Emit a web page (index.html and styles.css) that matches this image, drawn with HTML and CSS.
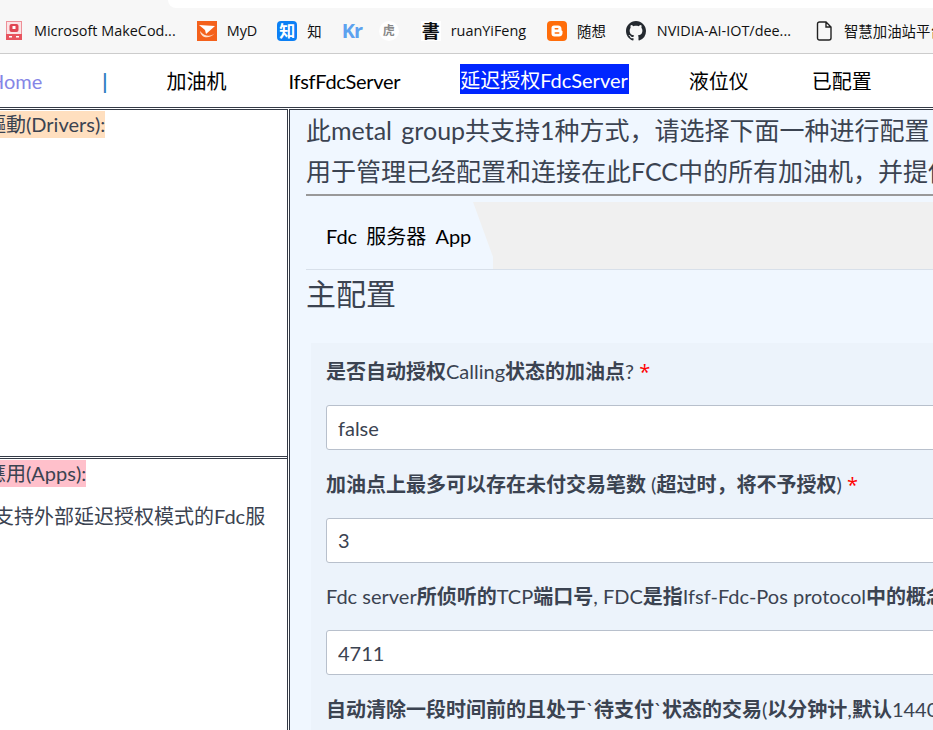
FILE: index.html
```html
<!DOCTYPE html>
<html lang="zh">
    <head>
        <meta charset="utf-8">
        <title>FdcServer</title>
        <link rel="stylesheet" href="styles.css">
    </head>
    <body>
        <div class="tabstrip"><div class="tab-edge"></div></div>

        <div class="bookmarks">
            <a class="mark mark-make">
                <svg class="fav-make" viewBox="0 0 16 19">
                    <rect x="0.5" y="0.5" width="15" height="18" fill="#fbe3e5" stroke="#ee8f97"/>
                    <rect x="0" y="13" width="16" height="6" fill="#e8545f"/>
                    <rect x="3.5" y="3" width="9" height="8" rx="2" fill="#e04653"/>
                    <rect x="6.5" y="5" width="3" height="3" fill="#fff"/>
                    <rect x="3" y="15" width="3" height="1.5" fill="#fff"/>
                    <rect x="10" y="15" width="3" height="1.5" fill="#fff"/>
                </svg>
                <span>Microsoft MakeCod...</span>
            </a>
            <a class="mark mark-myd">
                <svg class="fav" viewBox="0 0 20 20">
                    <rect width="20" height="20" fill="#f4611c"/>
                    <path d="M2 4 L18 5 L9 13 L8 9 Z" fill="#fff"/>
                    <path d="M3 10 C4 17 12 19 18 12 C14 16 8 16 3 10 Z" fill="#fde0cf"/>
                </svg>
                <span>MyD</span>
            </a>
            <a class="mark mark-zhi">
                <i class="fav fav-zhi">知</i>
                <span>知</span>
            </a>
            <a class="mark mark-kr"><i class="fav fav-kr">Kr</i></a>
            <a class="mark mark-hu"><i class="fav fav-hu">虎</i></a>
            <a class="mark mark-ruan">
                <i class="fav fav-shu">書</i>
                <span>ruanYiFeng</span>
            </a>
            <a class="mark mark-blog">
                <svg class="fav" viewBox="0 0 20 20">
                    <rect width="20" height="20" rx="4" fill="#ff6d0a"/>
                    <path d="M7 4.5 H11 A3.5 3.5 0 0 1 14.5 8 V9 A1.5 1.5 0 0 0 15.5 10 V12.5 A3.5 3.5 0 0 1 12 15.5 H7.5 A3 3 0 0 1 4.5 12.5 V7 A2.5 2.5 0 0 1 7 4.5 Z" fill="#fff"/>
                    <rect x="7.5" y="7" width="4" height="1.6" rx="0.8" fill="#ff6d0a"/>
                    <rect x="7.5" y="11.2" width="5" height="1.6" rx="0.8" fill="#ff6d0a"/>
                </svg>
                <span>随想</span>
            </a>
            <a class="mark mark-git">
                <svg class="fav" viewBox="0 0 16 16">
                    <path fill="#24292f" d="M8 0C3.58 0 0 3.58 0 8c0 3.54 2.29 6.53 5.47 7.59.4.07.55-.17.55-.38 0-.19-.01-.82-.01-1.49-2.01.37-2.53-.49-2.69-.94-.09-.23-.48-.94-.82-1.13-.28-.15-.68-.52-.01-.53.63-.01 1.08.58 1.23.82.72 1.21 1.87.87 2.33.66.07-.52.28-.87.51-1.07-1.78-.2-3.64-.89-3.64-3.95 0-.87.31-1.59.82-2.15-.08-.2-.36-1.02.08-2.12 0 0 .67-.21 2.2.82.64-.18 1.32-.27 2-.27s1.36.09 2 .27c1.53-1.04 2.2-.82 2.2-.82.44 1.1.16 1.92.08 2.12.51.56.82 1.27.82 2.15 0 3.07-1.87 3.75-3.65 3.95.29.25.54.73.54 1.48 0 1.07-.01 1.93-.01 2.2 0 .21.15.46.55.38A8.01 8.01 0 0 0 16 8c0-4.42-3.58-8-8-8z"/>
                </svg>
                <span>NVIDIA-AI-IOT/dee...</span>
            </a>
            <a class="mark mark-doc">
                <svg class="fav-doc" viewBox="0 0 16 20">
                    <path d="M1.5 3 A2 2 0 0 1 3.5 1 H10 L15 6 V17 A2 2 0 0 1 13 19 H3.5 A2 2 0 0 1 1.5 17 Z M10 1 V6 H15" fill="none" stroke="#222" stroke-width="1.4"/>
                </svg>
                <span>智慧加油站平台管理</span>
            </a>
        </div>

        <div class="topnav">
            <a class="nav-home">Home</a>
            <span class="nav-sep">|</span>
            <a class="nav-pumps">加油机</a>
            <a class="nav-ifsf">IfsfFdcServer</a>
            <a class="active">延迟授权FdcServer</a>
            <a class="nav-tank">液位仪</a>
            <a class="nav-done">已配置</a>
        </div>

        <div class="frames">
            <div class="side">
                <div class="pane pane-drivers">
                    <span class="tag tag-drivers">驅動(Drivers):</span>
                </div>
                <div class="pane pane-apps">
                    <span class="tag tag-apps">應用(Apps):</span>
                    <div class="app-item">支持外部延迟授权模式的Fdc服</div>
                </div>
            </div>

            <div class="content">
                <div class="intro">此metal group共支持1种方式，请选择下面一种进行配置</div>
                <div class="intro">用于管理已经配置和连接在此FCC中的所有加油机，并提供外部延迟授权</div>
                <hr>

                <div class="tabs">
                    <div class="tab">Fdc 服务器 App</div>
                </div>

                <h2>主配置</h2>

                <form class="panel">
                    <div class="field">
                        <label><b>是否自动授权</b>Calling<b>状态的加油点</b>? <em>*</em></label>
                        <input type="text" value="false">
                    </div>
                    <div class="field">
                        <label><b>加油点上最多可以存在未付交易笔数</b> (<b>超过时，将不予授权</b>) <em>*</em></label>
                        <input type="text" value="3">
                    </div>
                    <div class="field">
                        <label>Fdc server<b>所侦听的</b>TCP<b>端口号</b>, FDC<b>是指</b>Ifsf-Fdc-Pos protocol<b>中的概念</b></label>
                        <input type="text" value="4711">
                    </div>
                    <div class="field">
                        <label><b>自动清除一段时间前的且处于</b>`<b>待支付</b>`<b>状态的交易</b>(<b>以分钟计</b>,<b>默认</b>1440<b>分钟</b>)</label>
                    </div>
                </form>
            </div>
        </div>
    </body>
</html>
```

FILE: styles.css
```css
html, body {
    margin: 0;
    padding: 0;
    height: 100%;
    overflow: hidden;
}
body {
    width: 933px;
    height: 730px;
    background: #fff;
    color: #3b4351;
    font-family: Lato, "Noto Sans CJK SC", sans-serif;
    font-size: 20px;
}

/* browser bars */
.tabstrip {
    height: 8px;
    background: #f7f7f7;
    padding-left: 168px;
}
.tab-edge {
    height: 8px;
    background: #fff;
    border-bottom-left-radius: 12px;
}
.bookmarks {
    height: 45px;
    background: #f7f7f7;
    border-bottom: 1px solid #ccc;
    display: flex;
    align-items: center;
    overflow: hidden;
    white-space: nowrap;
    font-family: "Open Sans", "Noto Sans CJK SC", sans-serif;
    font-size: 14.4px;
    color: #111;
}
.mark {
    display: flex;
    align-items: center;
    flex: none;
    gap: 10px;
}
.mark-make { margin-left: 6px; gap: 12px; }
.mark-myd { margin-left: 21px; }
.mark-zhi { margin-left: 20px; }
.mark-kr { margin-left: 20px; }
.mark-hu { margin-left: 19px; }
.mark-ruan { margin-left: 22px; }
.mark-blog { margin-left: 21px; }
.mark-git { margin-left: 20px; gap: 11px; }
.mark-doc { margin-left: 25px; gap: 12px; }
.fav {
    display: block;
    width: 20px;
    height: 20px;
    flex: none;
    font-style: normal;
    text-align: center;
    line-height: 20px;
}
.fav-make { display: block; width: 16px; height: 19px; }
.fav-doc { display: block; width: 16px; height: 20px; }
.fav-zhi {
    background: #0c80f5;
    color: #fff;
    border-radius: 4px;
    font-size: 16px;
    font-weight: bold;
}
.fav-kr {
    width: 18px;
    color: #5da2ef;
    font-family: "Open Sans", sans-serif;
    font-size: 20px;
    font-weight: bold;
    letter-spacing: -1px;
}
.fav-hu {
    background: #fff;
    border-radius: 50%;
    color: #888;
    font-size: 12px;
    font-weight: bold;
}
.fav-shu {
    background: #fff;
    color: #111;
    font-size: 18px;
    font-weight: bold;
}

/* top menu */
.topnav {
    height: 53px;
    display: flex;
    align-items: center;
    margin-left: -11px;
    white-space: nowrap;
    color: #000;
}
.topnav a {
    line-height: 30px;
}
.topnav .nav-home {
    color: #8585e6;
}
.nav-sep {
    margin-left: 60px;
    color: #2f7fc1;
    font-weight: bold;
}
.nav-pumps { margin-left: 59px; }
.nav-ifsf {
    margin-left: 62px;
    letter-spacing: -0.3px;
}
.nav-tank { margin-left: 60px; }
.nav-done { margin-left: 63px; }
.topnav .active {
    height: 30px;
    margin: 0 0 3px 60px;
    padding: 0 1px 0 0;
    background: #0026ff;
    color: #fff;
    line-height: 33px;
}

/* frames */
.frames {
    height: 622px;
    display: flex;
    border-top: 1px solid #343a46;
    padding-top: 1px;
}
.side {
    width: 287px;
    flex: none;
    display: flex;
    flex-direction: column;
    border-right: 1px solid #343a46;
    overflow: hidden;
}
.pane {
    white-space: nowrap;
    border-top: 1px solid #343a46;
    padding-top: 1px;
}
.pane-drivers {
    height: 348px;
    box-sizing: border-box;
    border-bottom: 1px solid #343a46;
}
.pane-apps {
    margin-top: 1px;
    flex: 1;
}
.tag {
    display: inline-block;
    line-height: 27px;
    margin-left: -14px;
}
.tag-drivers { background: #ffdfbf; }
.tag-apps { background: #ffc0cb; }
.app-item {
    margin: 16px 0 0 -6px;
    line-height: 27px;
}

.content {
    flex: 1;
    min-width: 0;
    margin-left: 1px;
    border-left: 1px solid #343a46;
    border-top: 1px solid #343a46;
    background: #f0f7ff;
    padding-left: 16px;
    overflow: hidden;
    white-space: nowrap;
}
.intro {
    font-size: 25px;
    line-height: 41px;
    word-spacing: 3px;
}
hr {
    height: 2px;
    margin: 2px 0 6px;
    border: none;
    background: #999;
}
.tabs {
    height: 67px;
    background: #f0f0f0;
    border-bottom: 1px solid #d8e0ea;
}
.tab {
    width: 187px;
    height: 67px;
    box-sizing: border-box;
    padding-left: 20px;
    line-height: 69px;
    word-spacing: 4px;
    color: #000;
    background: #f0f7ff;
    clip-path: polygon(0 0, 167px 0, 187px 55px, 187px 100%, 0 100%);
}
h2 {
    margin: 0;
    font-size: 30px;
    font-weight: normal;
    line-height: 46px;
}
.panel {
    margin: 27px 0 0 5px;
    padding: 13px 0 0 15px;
    width: 800px;
    height: 400px;
    background: #ecf3fb;
}
.field {
    margin-bottom: 18.5px;
}
.field label {
    display: block;
    height: 30px;
    margin-bottom: 19px;
    line-height: 30px;
}
.field b {
    font-weight: bold;
}
.field em {
    color: #f00;
    font-family: "Open Sans", sans-serif;
    font-size: 20px;
    font-style: normal;
}
input[type=text] {
    display: block;
    width: 100%;
    height: 45px;
    box-sizing: border-box;
    padding: 0 11px;
    border: 1px solid #b8c0cc;
    border-radius: 3px;
    background: #fff;
    color: #3b4351;
    font-family: inherit;
    font-size: 20px;
}
```
